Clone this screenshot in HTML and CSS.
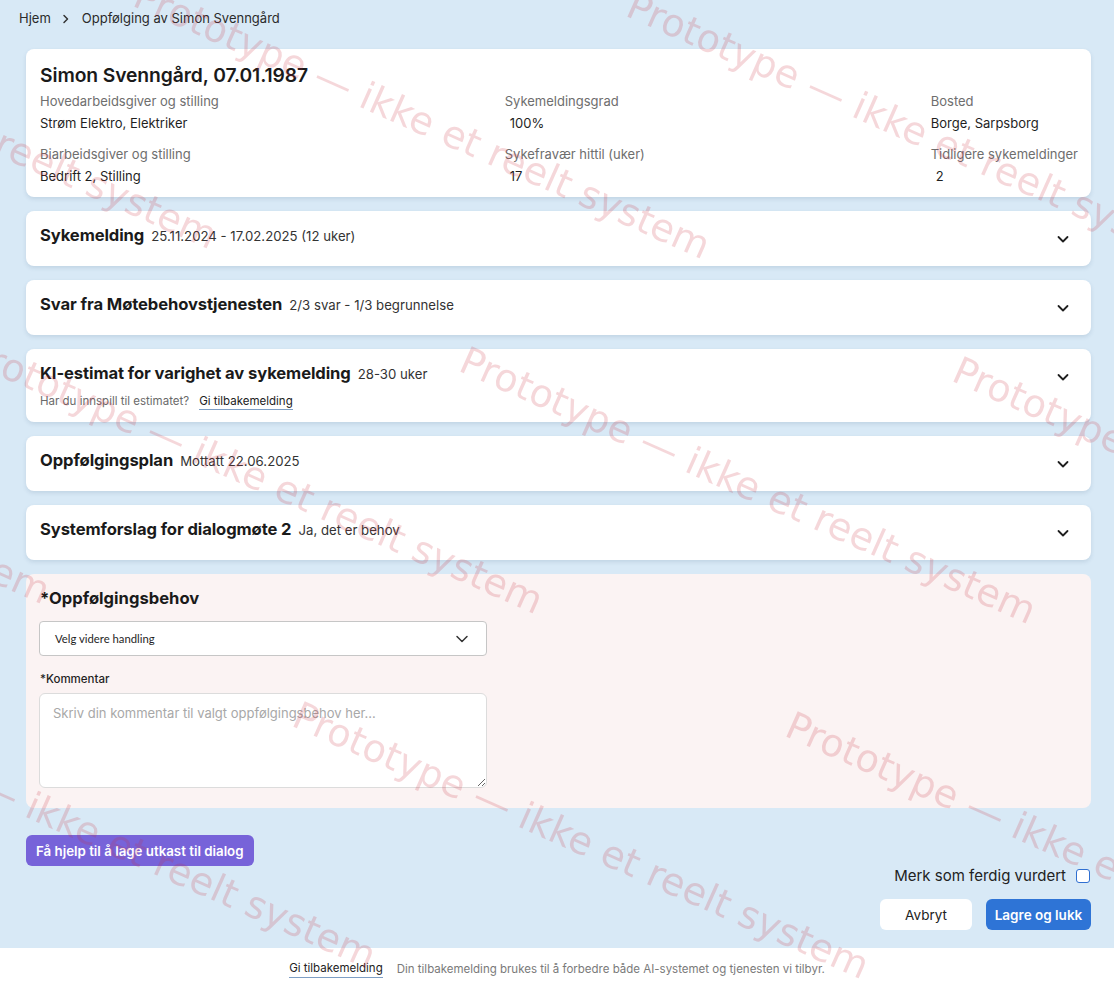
FILE: index.html
```html
<!DOCTYPE html>
<html lang="no">
<head>
<meta charset="utf-8">
<title>Oppfølging av Simon Svenngård</title>
<link rel="stylesheet" href="styles.css">
</head>
<body>
<div class="app">
  <main class="page">
    <nav class="breadcrumb">
      <span class="crumb">Hjem</span>
      <svg class="crumb-sep" viewBox="0 0 8 10" width="8" height="10" aria-hidden="true"><path d="M2 1.5 L5.5 5 L2 8.5" fill="none" stroke="#333" stroke-width="1.5" stroke-linecap="round" stroke-linejoin="round"/></svg>
      <span class="crumb">Oppfølging av Simon Svenngård</span>
    </nav>

    <div class="stack">
      <section class="card person">
        <h1 class="person-name">Simon Svenngård, 07.01.1987</h1>
        <div class="facts">
          <div class="fact-col">
            <div class="fact"><div class="fact-label">Hovedarbeidsgiver og stilling</div><div class="fact-value">Strøm Elektro, Elektriker</div></div>
            <div class="fact"><div class="fact-label">Biarbeidsgiver og stilling</div><div class="fact-value">Bedrift 2, Stilling</div></div>
          </div>
          <div class="fact-col">
            <div class="fact"><div class="fact-label">Sykemeldingsgrad</div><div class="fact-value indent">100%</div></div>
            <div class="fact"><div class="fact-label">Sykefravær hittil (uker)</div><div class="fact-value indent">17</div></div>
          </div>
          <div class="fact-col">
            <div class="fact"><div class="fact-label">Bosted</div><div class="fact-value">Borge, Sarpsborg</div></div>
            <div class="fact"><div class="fact-label">Tidligere sykemeldinger</div><div class="fact-value indent">2</div></div>
          </div>
        </div>
      </section>

      <section class="card accordion">
        <div class="acc-head">
          <h2 class="acc-title">Sykemelding<span class="acc-meta">25.11.2024 - 17.02.2025 (12 uker)</span></h2>
          <svg class="chev" viewBox="0 0 16 16" width="16" height="16" aria-hidden="true"><path d="M3.5 6 L8 10.5 L12.5 6" fill="none" stroke="#1f1f1f" stroke-width="1.8" stroke-linecap="round" stroke-linejoin="round"/></svg>
        </div>
      </section>

      <section class="card accordion">
        <div class="acc-head">
          <h2 class="acc-title">Svar fra Møtebehovstjenesten<span class="acc-meta">2/3 svar - 1/3 begrunnelse</span></h2>
          <svg class="chev" viewBox="0 0 16 16" width="16" height="16" aria-hidden="true"><path d="M3.5 6 L8 10.5 L12.5 6" fill="none" stroke="#1f1f1f" stroke-width="1.8" stroke-linecap="round" stroke-linejoin="round"/></svg>
        </div>
      </section>

      <section class="card accordion with-note">
        <div class="acc-head">
          <h2 class="acc-title">KI-estimat for varighet av sykemelding<span class="acc-meta">28-30 uker</span></h2>
          <svg class="chev" viewBox="0 0 16 16" width="16" height="16" aria-hidden="true"><path d="M3.5 6 L8 10.5 L12.5 6" fill="none" stroke="#1f1f1f" stroke-width="1.8" stroke-linecap="round" stroke-linejoin="round"/></svg>
        </div>
        <p class="acc-note">Har du innspill til estimatet?<a class="feedback-link" href="#">Gi tilbakemelding</a></p>
      </section>

      <section class="card accordion">
        <div class="acc-head">
          <h2 class="acc-title">Oppfølgingsplan<span class="acc-meta">Mottatt 22.06.2025</span></h2>
          <svg class="chev" viewBox="0 0 16 16" width="16" height="16" aria-hidden="true"><path d="M3.5 6 L8 10.5 L12.5 6" fill="none" stroke="#1f1f1f" stroke-width="1.8" stroke-linecap="round" stroke-linejoin="round"/></svg>
        </div>
      </section>

      <section class="card accordion">
        <div class="acc-head">
          <h2 class="acc-title">Systemforslag for dialogmøte 2<span class="acc-meta">Ja, det er behov</span></h2>
          <svg class="chev" viewBox="0 0 16 16" width="16" height="16" aria-hidden="true"><path d="M3.5 6 L8 10.5 L12.5 6" fill="none" stroke="#1f1f1f" stroke-width="1.8" stroke-linecap="round" stroke-linejoin="round"/></svg>
        </div>
      </section>

      <section class="card need">
        <h2 class="need-title">*Oppfølgingsbehov</h2>
        <div class="select">
          <span class="select-text">Velg videre handling</span>
          <svg viewBox="0 0 14 10" width="14" height="10" aria-hidden="true"><path d="M2 2.5 L7 7.5 L12 2.5" fill="none" stroke="#333" stroke-width="1.5" stroke-linecap="round" stroke-linejoin="round"/></svg>
        </div>
        <label class="field-label" for="kommentar">*Kommentar</label>
        <textarea id="kommentar" class="comment" placeholder="Skriv din kommentar til valgt oppfølgingsbehov her..."></textarea>
      </section>
    </div>

    <div class="assist-row">
      <button class="btn-assist" type="button">Få hjelp til å lage utkast til dialog</button>
    </div>

    <div class="done-row">
      <label class="done-label">Merk som ferdig vurdert<span class="checkbox"></span></label>
    </div>

    <div class="action-row">
      <button class="btn btn-ghost" type="button">Avbryt</button>
      <button class="btn btn-primary" type="button">Lagre og lukk</button>
    </div>
  </main>

  <footer class="footer">
    <a class="feedback-link" href="#">Gi tilbakemelding</a>
    <span class="footer-text">Din tilbakemelding brukes til å forbedre både AI-systemet og tjenesten vi tilbyr.</span>
  </footer>
</div>

<!-- repeating prototype stamp laid over the whole view -->
<div class="stamp-layer" aria-hidden="true">
  <span class="stamp" style="--c:-2;--r:-1">Prototype — ikke et reelt system</span>
  <span class="stamp" style="--c:-1;--r:-1">Prototype — ikke et reelt system</span>
  <span class="stamp" style="--c:0;--r:-1">Prototype — ikke et reelt system</span>
  <span class="stamp" style="--c:-2;--r:0">Prototype — ikke et reelt system</span>
  <span class="stamp" style="--c:-1;--r:0">Prototype — ikke et reelt system</span>
  <span class="stamp" style="--c:0;--r:0">Prototype — ikke et reelt system</span>
  <span class="stamp" style="--c:1;--r:0">Prototype — ikke et reelt system</span>
  <span class="stamp" style="--c:-1;--r:1">Prototype — ikke et reelt system</span>
  <span class="stamp" style="--c:0;--r:1">Prototype — ikke et reelt system</span>
  <span class="stamp" style="--c:1;--r:1">Prototype — ikke et reelt system</span>
</div>
</body>
</html>
```

FILE: styles.css
```css
* { box-sizing: border-box; }

html, body {
  margin: 0;
  height: 100%;
  overflow: hidden;
}

body {
  font-family: Inter, "Noto Sans", "Liberation Sans", sans-serif;
  color: #1d1d1f;
  background: #d8e9f6;
}

.app {
  min-height: 100vh;
  display: flex;
  flex-direction: column;
}

.page {
  flex: 1;
  padding: 0 23px 18px 26px;
}

/* breadcrumb */
.breadcrumb {
  height: 49px;
  display: flex;
  align-items: flex-start;
  gap: 11px;
  padding-top: 10px;
  margin-left: -7px;
  font-size: 13px;
  line-height: 17px;
  color: #2b2b2b;
}
.crumb-sep { margin-top: 4px; margin-right: 1px; }

/* cards */
.stack {
  display: flex;
  flex-direction: column;
  gap: 14px;
}

.card {
  background: #fff;
  border-radius: 8px;
  box-shadow: 0 2px 4px rgba(40, 70, 110, 0.13);
}

.person {
  padding: 14px 13px 12px 14px;
}
.person-name {
  margin: 0;
  font-size: 19.3px;
  line-height: 24px;
  font-weight: 600;
  color: #1a1a1a;
  letter-spacing: -0.1px;
}
.facts {
  display: flex;
  justify-content: space-between;
  margin-top: 5px;
}
.fact-col {
  display: flex;
  flex-direction: column;
  gap: 13px;
}
.fact-label {
  font-size: 13px;
  line-height: 18px;
  color: #6e6e6e;
}
.fact-value {
  margin-top: 4px;
  font-size: 13px;
  line-height: 18px;
  color: #1f1f1f;
}
.fact-value.indent { padding-left: 5px; }

/* accordions */
.accordion {
  height: 55px;
  padding: 13px 20px 0 14px;
}
.accordion.with-note { height: 73px; }

.acc-head {
  display: flex;
  justify-content: space-between;
  align-items: flex-start;
}
.acc-title {
  margin: 0;
  font-size: 16.6px;
  line-height: 22px;
  font-weight: 700;
  color: #1a1a1a;
  letter-spacing: -0.1px;
}
.acc-meta {
  margin-left: 7px;
  font-size: 13.2px;
  font-weight: 400;
  color: #333;
  letter-spacing: 0;
}
.chev { margin-top: 7px; }

.acc-note {
  margin: 8px 0 0;
  font-size: 11.5px;
  line-height: 16px;
  color: #6a6a6a;
}
.feedback-link {
  color: #222;
  text-decoration: none;
  border-bottom: 1px solid #7d9ec4;
  padding-bottom: 1px;
}
.acc-note .feedback-link { margin-left: 10px; }

/* follow-up need form */
.need {
  background: #fbf3f3;
  box-shadow: none;
  padding: 13px 14px 20px 13px;
  display: flex;
  flex-direction: column;
  align-items: flex-start;
}
.need-title {
  margin: 0 0 12px 1px;
  font-size: 16.6px;
  line-height: 22px;
  font-weight: 700;
  color: #1a1a1a;
}
.select {
  width: 448px;
  height: 35px;
  display: flex;
  align-items: center;
  justify-content: space-between;
  padding: 0 17px 0 15px;
  background: #fff;
  border: 1px solid #c6c6c6;
  border-radius: 4px;
}
.select-text {
  font-family: Lato, "Open Sans", sans-serif;
  font-size: 11.3px;
  color: #1f1f1f;
}
.field-label {
  margin: 15px 0 6px 1px;
  font-size: 11.5px;
  line-height: 16px;
  font-weight: 500;
  color: #1f1f1f;
}
.comment {
  width: 448px;
  height: 95px;
  margin: 0;
  padding: 10px 13px;
  border: 1px solid #dcdcdc;
  border-radius: 6px;
  background: #fff;
  font-family: Inter, "Noto Sans", sans-serif;
  font-size: 13px;
  line-height: 18px;
  color: #1f1f1f;
  resize: vertical;
}
.comment::placeholder { color: #a8a8a8; }

/* actions */
.assist-row { margin-top: 27px; }
.btn-assist {
  height: 31px;
  padding: 0 10px;
  border: 0;
  border-radius: 6px;
  background: #7763d9;
  color: #fff;
  font-family: inherit;
  font-size: 13.3px;
  font-weight: 600;
}

.done-row {
  display: flex;
  justify-content: flex-end;
  margin-top: 0;
}
.done-label {
  display: flex;
  align-items: center;
  gap: 10px;
  height: 20px;
  font-size: 15px;
  line-height: 20px;
  color: #222;
}
.checkbox {
  width: 14px;
  height: 14px;
  margin-right: 1px;
  border: 1.5px solid #2f6fd1;
  border-radius: 3px;
  background: #fff;
}

.action-row {
  margin-top: 13px;
  display: flex;
  justify-content: flex-end;
  gap: 14px;
}
.btn {
  height: 31px;
  border: 0;
  border-radius: 6px;
  font-family: inherit;
  font-size: 13.5px;
}
.btn-ghost {
  width: 92px;
  background: #fff;
  color: #222;
}
.btn-primary {
  width: 105px;
  background: #2e74d6;
  color: #fff;
  font-weight: 600;
}

/* footer */
.footer {
  height: 41px;
  display: flex;
  justify-content: center;
  align-items: center;
  gap: 14px;
  background: #fff;
  font-size: 11.5px;
  line-height: 16px;
}
.footer-text { color: #7a7a7a; }

/* prototype stamp */
.stamp-layer {
  position: fixed;
  inset: 0;
  overflow: hidden;
  pointer-events: none;
  z-index: 10;
}
.stamp {
  position: absolute;
  left: calc(470px + var(--c) * 493px - var(--r) * 167px);
  top: calc(341px + var(--c) * 10px + var(--r) * 355px);
  transform: rotate(24deg);
  transform-origin: 0 0;
  white-space: nowrap;
  font-family: "DejaVu Sans", sans-serif;
  font-size: 38.3px;
  line-height: 1;
  color: rgba(200, 45, 58, 0.19);
}
```
